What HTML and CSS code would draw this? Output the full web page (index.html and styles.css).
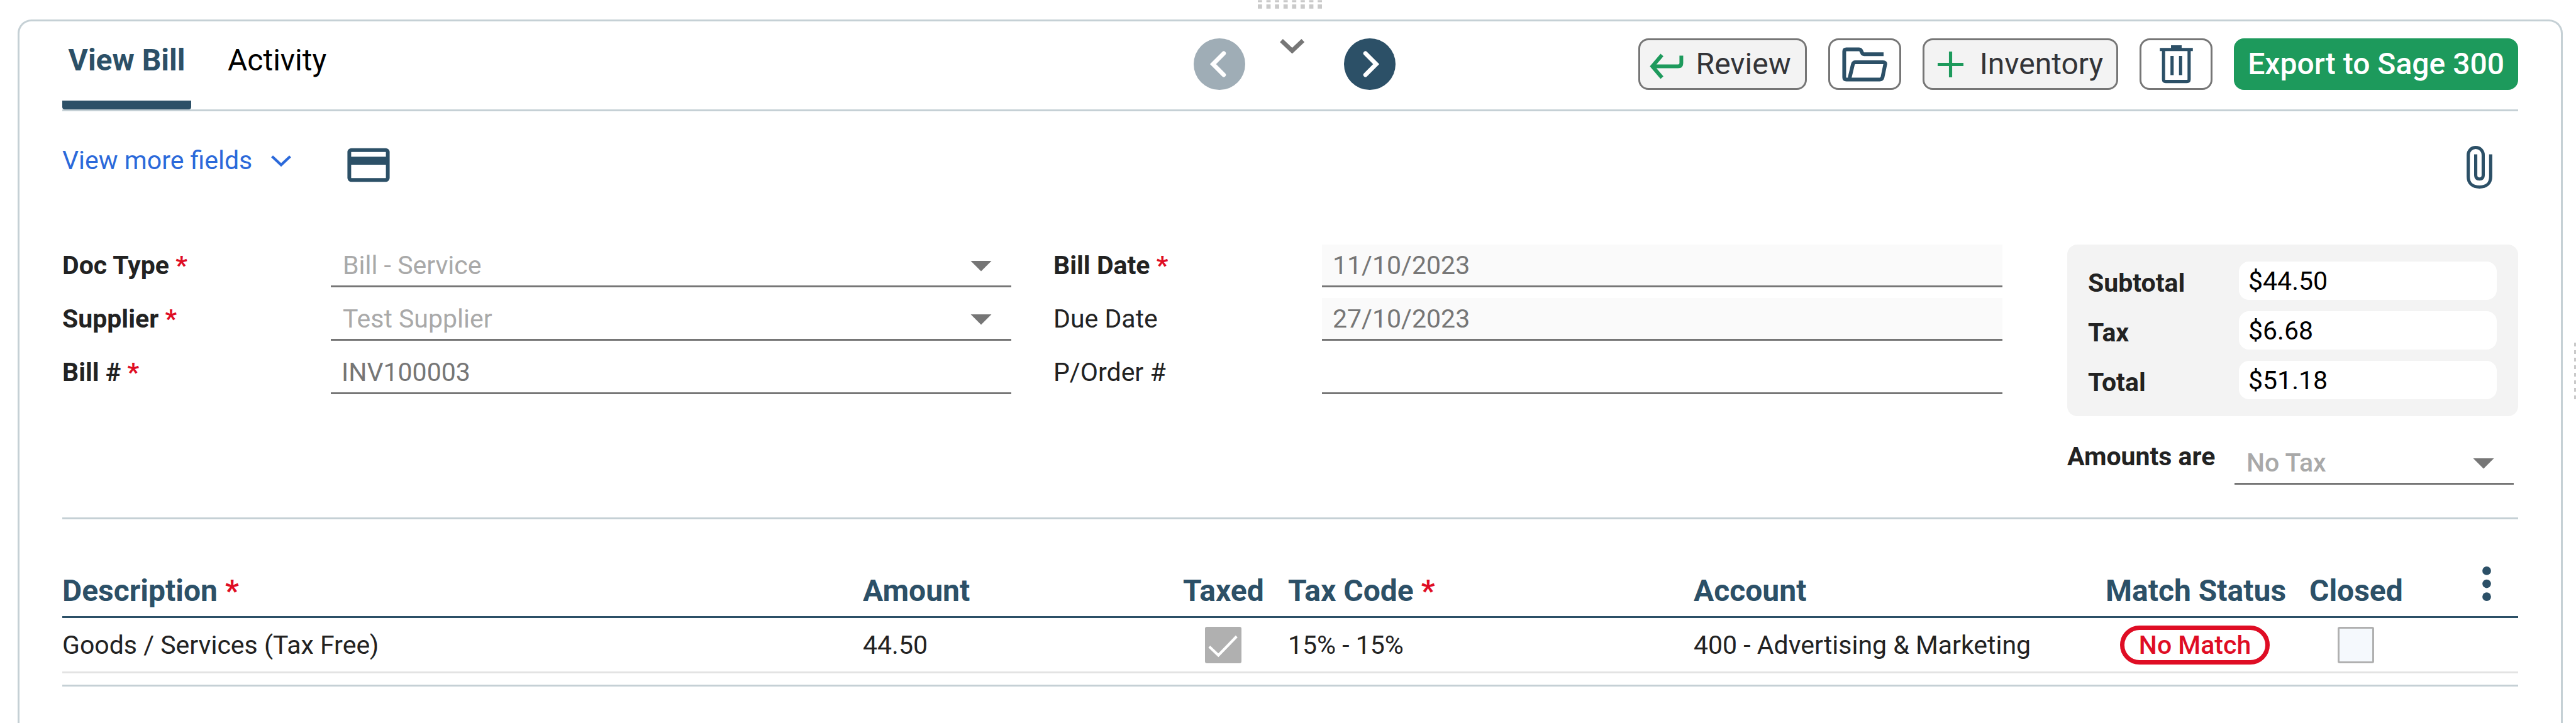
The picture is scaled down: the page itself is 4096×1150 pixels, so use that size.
FILE: index.html
```html
<!DOCTYPE html>
<html lang="en">

<head>
    <meta charset="UTF-8">
    <meta name="viewport" content="width=device-width, initial-scale=1.0">
    <title>View Bill</title>
    <link rel="stylesheet" href="styles.css">
</head>

<body>
    <!-- Resize handles -->
    <svg class="handle-top" viewBox="0 0 120 16" aria-hidden="true">
        <path d="M0 2h120" stroke="#cacaca" stroke-width="4" stroke-dasharray="8 8" />
        <path d="M0 12h120" stroke="#cacaca" stroke-width="8" stroke-dasharray="8 8" />
    </svg>
    <svg class="handle-right" viewBox="0 0 4 120" aria-hidden="true">
        <path d="M2 0v120" stroke="#cacaca" stroke-width="4" stroke-dasharray="8 8" />
    </svg>

    <main class="panel">
        <header class="header">
            <nav class="tabs">
                <button type="button" class="tab active">View Bill</button>
                <button type="button" class="tab">Activity</button>
            </nav>

            <div class="pager">
                <button type="button" class="round-btn" aria-label="Previous bill" disabled>
                    <svg viewBox="0 0 96 96"><path d="M56 28L36 48l20 20" /></svg>
                </button>
                <button type="button" class="icon-btn" aria-label="Collapse">
                    <svg class="icon-collapse" viewBox="0 0 57 28"><path d="M4 4l20 19L44 4" /></svg>
                </button>
                <button type="button" class="round-btn" aria-label="Next bill">
                    <svg viewBox="0 0 96 96"><path d="M40 28l20 20-20 20" /></svg>
                </button>
            </div>

            <div class="actions">
                <button type="button" class="btn">
                    <svg class="icon-return" viewBox="0 0 64 48"><path d="M24 3L6 24l18 21M6 24h48q6 0 6-6V4" /></svg>
                    Review
                </button>
                <button type="button" class="btn btn-icon" aria-label="Open folder">
                    <svg class="icon-folder" viewBox="0 0 84 64"><path d="M77 13H41q-3 0-4-3l-2-4q-1-2-4-2H8Q4 4 4 8v48q0 4 4 4h62q4 0 5-4l5-24q1-4-4-4H25q-4 0-5 4l-6 25" /></svg>
                </button>
                <button type="button" class="btn btn-inventory">
                    <svg class="icon-plus" viewBox="0 0 48 48"><path d="M24 0v48M0 24h48" /></svg>
                    Inventory
                </button>
                <button type="button" class="btn btn-icon" aria-label="Delete">
                    <svg class="icon-trash" viewBox="0 0 62 72"><path d="M0 8h62M21 3h20M7 8v56q0 4 4 4h40q4 0 4-4V8M23 20v36M39 20v36" /></svg>
                </button>
                <button type="button" class="btn btn-export">Export to Sage 300</button>
            </div>
        </header>

        <div class="toolbar">
            <button type="button" class="more-link">
                View more fields
                <svg class="icon-more" viewBox="0 0 40 22"><path d="M3 3l17 16L37 3" /></svg>
            </button>
            <button type="button" class="icon-btn card-btn" aria-label="Payment">
                <svg class="icon-card" viewBox="0 0 80 64"><rect x="4" y="4" width="72" height="56" rx="4" /><path d="M4 24h72" stroke-width="15" /></svg>
            </button>
            <button type="button" class="icon-btn clip-btn" aria-label="Attachments">
                <svg class="icon-clip" viewBox="0 0 48 80"><path d="M45 16v42c0 12-8 19-21 19S3 70 3 58V17C3 9 9 3 17 3s14 6 14 14v38c0 5-3 7-7 7s-7-2-7-7V16" /></svg>
            </button>
        </div>

        <form class="bill-form">
            <div class="fields">
                <div class="field-group">
                    <div class="field">
                        <label for="doc-type" class="required">Doc Type</label>
                        <div class="select">
                            <select id="doc-type" disabled>
                                <option>Bill - Service</option>
                            </select>
                        </div>
                    </div>
                    <div class="field">
                        <label for="supplier" class="required">Supplier</label>
                        <div class="select">
                            <select id="supplier" disabled>
                                <option>Test Supplier</option>
                            </select>
                        </div>
                    </div>
                    <div class="field">
                        <label for="bill-no" class="required">Bill #</label>
                        <input type="text" id="bill-no" value="INV100003" readonly>
                    </div>
                </div>
                <div class="field-group">
                    <div class="field">
                        <label for="bill-date" class="required">Bill Date</label>
                        <input type="text" id="bill-date" class="date" value="11/10/2023" readonly>
                    </div>
                    <div class="field">
                        <label for="due-date">Due Date</label>
                        <input type="text" id="due-date" class="date" value="27/10/2023" readonly>
                    </div>
                    <div class="field">
                        <label for="order-no">P/Order #</label>
                        <input type="text" id="order-no" readonly>
                    </div>
                </div>
            </div>

            <div class="summary">
                <div class="totals">
                    <label for="subtotal">Subtotal</label>
                    <input type="text" id="subtotal" value="$44.50" readonly>
                    <label for="tax">Tax</label>
                    <input type="text" id="tax" value="$6.68" readonly>
                    <label for="total">Total</label>
                    <input type="text" id="total" value="$51.18" readonly>
                </div>
                <div class="amounts">
                    <label for="amounts-are">Amounts are</label>
                    <div class="select">
                        <select id="amounts-are" disabled>
                            <option>No Tax</option>
                        </select>
                    </div>
                </div>
            </div>
        </form>

        <section class="lines">
            <table>
                <colgroup>
                    <col>
                    <col class="col-amount">
                    <col class="col-taxed">
                    <col class="col-code">
                    <col class="col-account">
                    <col class="col-status">
                    <col class="col-closed">
                    <col class="col-menu">
                </colgroup>
                <thead>
                    <tr>
                        <th class="required">Description</th>
                        <th>Amount</th>
                        <th class="center">Taxed</th>
                        <th class="required">Tax Code</th>
                        <th>Account</th>
                        <th class="center">Match Status</th>
                        <th class="center">Closed</th>
                        <th class="menu">
                            <button type="button" class="icon-btn" aria-label="Column options">
                                <svg class="icon-dots" viewBox="0 0 16 64"><circle cx="8" cy="8" r="8" /><circle cx="8" cy="32" r="8" /><circle cx="8" cy="56" r="8" /></svg>
                            </button>
                        </th>
                    </tr>
                </thead>
                <tbody>
                    <tr>
                        <td>Goods / Services (Tax Free)</td>
                        <td>44.50</td>
                        <td class="center"><input type="checkbox" aria-label="Taxed" checked disabled></td>
                        <td>15% - 15%</td>
                        <td>400 - Advertising &amp; Marketing</td>
                        <td class="center"><span class="badge">No Match</span></td>
                        <td class="center"><input type="checkbox" aria-label="Closed" disabled></td>
                        <td></td>
                    </tr>
                </tbody>
            </table>
        </section>
    </main>
</body>

</html>
```
FILE: styles.css
```css
* {
    box-sizing: border-box;
}

body {
    margin: 0;
    padding: 31px 21px 0 28px;
    background: #fff;
    color: #222;
    font-family: Roboto, Arial, sans-serif;
    font-size: 41px;
    line-height: 52px;
    overflow: hidden;
}

button,
input,
select {
    font: inherit;
    margin: 0;
}

button {
    padding: 0;
    border: none;
    background: none;
    cursor: pointer;
}

svg {
    display: block;
    flex: none;
    fill: none;
}

/* Resize handles on the window edges */
.handle-top {
    position: absolute;
    top: 0;
    left: 50%;
    width: 102px;
    height: 14px;
    margin-left: -48px;
}

.handle-right {
    position: absolute;
    top: 539px;
    right: 0;
    width: 3px;
    height: 102px;
}

.panel {
    min-height: calc(100vh - 31px);
    padding: 0 68px;
    border: 3px solid #c5d0d5;
    border-bottom: none;
    border-radius: 22px 22px 0 0;
}

/* Header */
.header {
    display: grid;
    grid-template-columns: 1fr auto 1fr;
    border-bottom: 3px solid #c5d0d5;
    font-size: 48px;
    line-height: 56px;
}

.tabs {
    display: flex;
    gap: 58px;
}

.tab {
    padding: 34px 0 50px;
    color: #000;
}

.tab.active {
    min-width: 205px;
    border-radius: 4px;
    background: linear-gradient(#2c5067, #2c5067) bottom / 100% 14px no-repeat;
    color: #2c5067;
    font-weight: bold;
}

.pager {
    display: flex;
    align-items: flex-start;
    gap: 54px;
    padding: 27px 0 0 14px;
}

.round-btn {
    width: 82px;
    height: 82px;
    border-radius: 50%;
    background: #2c5067;
}

.round-btn:disabled {
    background: #9fadb6;
}

.round-btn svg {
    width: 82px;
    height: 82px;
    stroke: #fff;
    stroke-width: 8;
    stroke-linecap: round;
}

.actions {
    display: flex;
    justify-content: flex-end;
    align-items: flex-start;
    gap: 34px;
    padding-top: 27px;
}

.btn {
    display: flex;
    align-items: center;
    gap: 20px;
    height: 82px;
    padding: 0 22px 0 14px;
    border: 3px solid #767676;
    border-radius: 16px;
    background: #f3f3f3;
    color: #333438;
    white-space: nowrap;
}

.btn-icon {
    width: 116px;
    padding: 0;
    justify-content: center;
    background: #fff;
}

.btn-inventory {
    gap: 26px;
    padding: 0 21px;
}

.btn-export {
    padding: 0 19px;
    border-color: #1d9a5c;
    background: #1d9a5c;
    color: #fff;
    font-weight: 500;
}

/* Icons */
.icon-collapse {
    width: 49px;
    height: 24px;
    stroke: #767676;
    stroke-width: 8;
}

.icon-return {
    width: 55px;
    height: 41px;
    margin-top: 6px;
    stroke: #1d9a5c;
    stroke-width: 7;
}

.icon-plus {
    width: 41px;
    height: 41px;
    stroke: #1d9a5c;
    stroke-width: 6;
}

.icon-folder {
    width: 72px;
    height: 55px;
    stroke: #2c5067;
    stroke-width: 7;
}

.icon-trash {
    width: 53px;
    height: 61px;
    stroke: #2c5067;
    stroke-width: 6;
}

.icon-more {
    width: 34px;
    height: 19px;
    stroke: #2b69da;
    stroke-width: 5;
}

.icon-card {
    width: 68px;
    height: 55px;
    stroke: #2c5067;
    stroke-width: 7;
}

.icon-clip {
    width: 41px;
    height: 68px;
    stroke: #2c5067;
    stroke-width: 6;
}

.icon-dots {
    width: 14px;
    height: 55px;
    fill: #2c5067;
}

/* Toolbar */
.toolbar {
    display: flex;
    align-items: flex-start;
    padding-top: 52px;
}

.more-link {
    display: flex;
    align-items: center;
    gap: 29px;
    color: #2b69da;
}

.card-btn {
    margin: 6px 0 0 88px;
}

.clip-btn {
    margin: 3px 41px 0 auto;
}

/* Bill fields */
.bill-form {
    display: grid;
    grid-template-columns: 1fr 717px;
    gap: 103px;
    margin-top: 89px;
    padding-bottom: 49px;
    border-bottom: 3px solid #c5d0d5;
}

.fields {
    display: grid;
    grid-template-columns: 1fr 1fr;
    gap: 67px;
}

.field-group {
    display: flex;
    flex-direction: column;
    gap: 17px;
}

.field {
    display: grid;
    grid-template-columns: 427px 1fr;
    align-items: center;
}

.field label {
    padding-bottom: 2px;
}

label.required {
    font-weight: bold;
}

.required::after {
    content: " *";
    color: #df0d24;
}

.field input {
    width: 100%;
    height: 68px;
    padding: 0 17px;
    border: none;
    border-bottom: 3px solid #767676;
    background: none;
    color: #767676;
}

.field input.date {
    background: #fafafa;
}

.select {
    display: grid;
    align-items: center;
}

.select select {
    grid-area: 1 / 1;
    width: 100%;
    height: 68px;
    padding: 0 19px;
    border: none;
    border-bottom: 3px solid #767676;
    border-radius: 0;
    background: none;
    color: #a9a9a9;
    opacity: 1;
    appearance: none;
}

.select::after {
    content: "";
    grid-area: 1 / 1;
    justify-self: end;
    width: 34px;
    height: 17px;
    margin-right: 31px;
    background: #767676;
    clip-path: polygon(0 0, 100% 0, 50% 100%);
}

/* Totals */
.totals {
    display: grid;
    grid-template-columns: 240px 1fr;
    row-gap: 18px;
    padding: 27px 34px 27px 33px;
    border-radius: 16px;
    background: #f3f3f3;
}

.totals label,
.amounts label {
    font-weight: bold;
}

.totals label {
    padding-top: 8px;
}

.totals input {
    width: 100%;
    height: 61px;
    padding: 0 15px;
    border: none;
    border-radius: 16px;
    background: #fff;
    color: #000;
}

.amounts {
    display: grid;
    grid-template-columns: 266px 1fr;
    align-items: center;
    margin: 38px 7px 0 0;
}

.amounts label {
    padding-bottom: 22px;
}

.amounts select {
    font-weight: 500;
}

/* Bill lines */
.lines {
    padding: 75px 0 18px;
    border-bottom: 3px solid #c5d0d5;
}

table {
    width: 100%;
    table-layout: fixed;
    border-spacing: 0;
}

.col-amount {
    width: 509px;
}

.col-taxed {
    width: 167px;
}

.col-code {
    width: 645px;
}

.col-account {
    width: 655px;
}

.col-status {
    width: 324px;
}

.col-closed {
    width: 187px;
}

.col-menu {
    width: 145px;
}

th {
    padding: 0 0 12px;
    border-bottom: 3px solid #2c5067;
    color: #2c5067;
    font-size: 48px;
    line-height: 56px;
    font-weight: bold;
    text-align: left;
    vertical-align: bottom;
    white-space: nowrap;
}

td {
    height: 88px;
    padding: 0;
    border-bottom: 3px solid #e3e3e3;
    white-space: nowrap;
}

th.center,
td.center {
    padding-right: 40px;
    text-align: center;
}

th.menu {
    padding-bottom: 24px;
}

.menu .icon-btn {
    display: block;
    margin: 0 43px 0 auto;
}

.badge {
    display: block;
    width: fit-content;
    margin: 0 auto;
    padding: 0 23px;
    border: 7px solid #df0d24;
    border-radius: 31px;
    color: #df0d24;
    line-height: 48px;
    font-weight: 500;
}

input[type="checkbox"] {
    display: block;
    width: 58px;
    height: 58px;
    margin: 0 auto;
    border: 3px solid #b0b0b0;
    border-radius: 3px;
    background: #f5f9fd;
    appearance: none;
}

input[type="checkbox"]:checked {
    background: #b0b0b0 url("data:image/svg+xml,%3Csvg xmlns='http://www.w3.org/2000/svg' viewBox='0 0 68 68'%3E%3Cpath d='M8 37l17 16L59 18' fill='none' stroke='%23fff' stroke-width='5'/%3E%3C/svg%3E") center / 58px 58px border-box;
}
```
